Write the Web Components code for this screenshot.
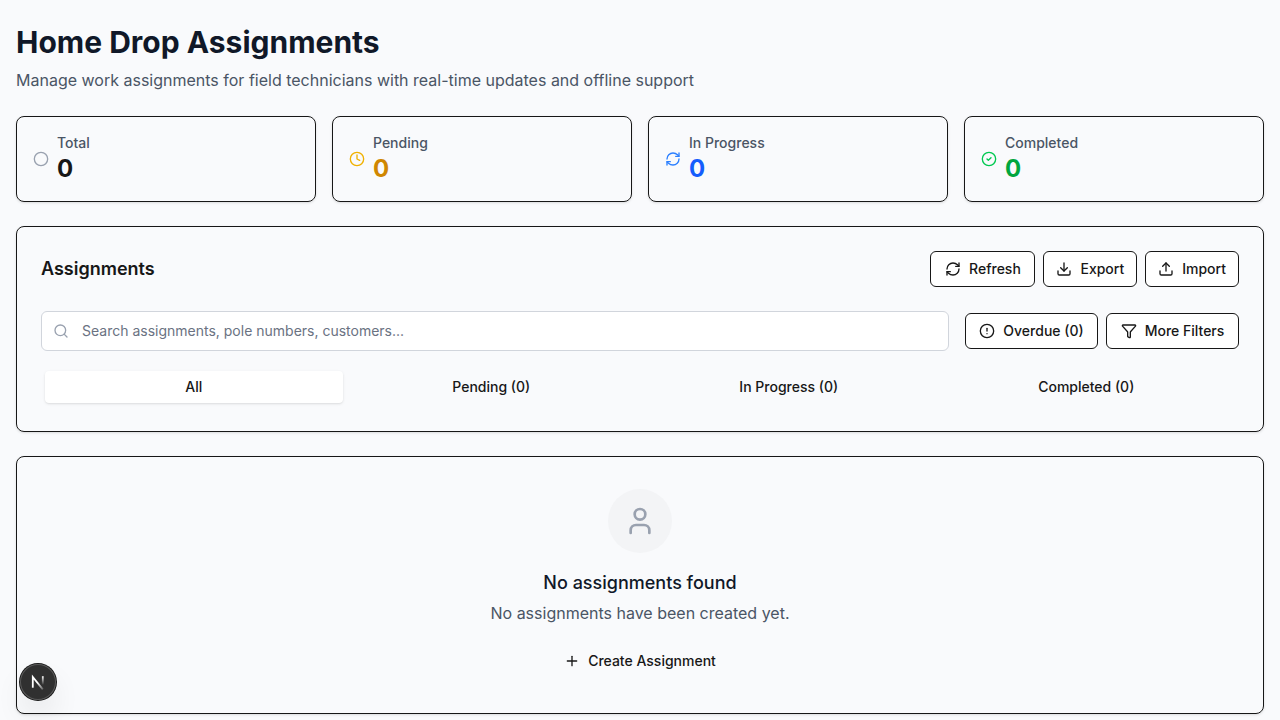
<!DOCTYPE html>
<html lang="en">
<head>
<meta charset="utf-8">
<meta name="viewport" content="width=device-width, initial-scale=1">
<title>Home Drop Assignments</title>
<style>
  body { margin: 0; background: #f9fafc; color: #171717; font: 16px/24px Inter, "Liberation Sans", sans-serif; }
</style>
</head>
<body>
<assignments-page></assignments-page>
<dev-badge></dev-badge>
<script>
const ICONS = {
  circle: '<circle cx="12" cy="12" r="10"/>',
  clock: '<circle cx="12" cy="12" r="10"/><path d="M12 6v6l4 2"/>',
  refresh: '<path d="M3 12a9 9 0 0 1 9-9 9.75 9.75 0 0 1 6.74 2.74L21 8"/><path d="M21 3v5h-5"/><path d="M21 12a9 9 0 0 1-9 9 9.75 9.75 0 0 1-6.74-2.74L3 16"/><path d="M8 16H3v5"/>',
  check: '<circle cx="12" cy="12" r="10"/><path d="m9 12 2 2 4-4"/>',
  download: '<path d="M12 15V3"/><path d="M21 15v4a2 2 0 0 1-2 2H5a2 2 0 0 1-2-2v-4"/><path d="m7 10 5 5 5-5"/>',
  upload: '<path d="M12 3v12"/><path d="m17 8-5-5-5 5"/><path d="M21 15v4a2 2 0 0 1-2 2H5a2 2 0 0 1-2-2v-4"/>',
  search: '<path d="m21 21-4.34-4.34"/><circle cx="11" cy="11" r="8"/>',
  alert: '<circle cx="12" cy="12" r="10"/><path d="M12 8v4"/><path d="M12 16h.01"/>',
  funnel: '<path d="M10 20a1 1 0 0 0 .553.895l2 1A1 1 0 0 0 14 21v-7a2 2 0 0 1 .517-1.341L21.74 4.67A1 1 0 0 0 21 3H3a1 1 0 0 0-.742 1.67l7.225 7.989A2 2 0 0 1 10 14z"/>',
  user: '<path d="M19 21v-2a4 4 0 0 0-4-4H9a4 4 0 0 0-4 4v2"/><circle cx="12" cy="7" r="4"/>',
  plus: '<path d="M5 12h14"/><path d="M12 5v14"/>'
};

const define = (name, render) => customElements.define(name, class extends HTMLElement {
  connectedCallback() {
    if (this.shadowRoot) return;
    this.attachShadow({ mode: 'open' }).innerHTML = render(this);
  }
});

define('ui-icon', el => `
  <style>
    :host { display: block; flex: none; width: var(--icon-size, 16px); height: var(--icon-size, 16px); }
    svg { display: block; width: 100%; height: 100%; }
  </style>
  <svg viewBox="0 0 24 24" fill="none" stroke="currentColor" stroke-width="2" stroke-linecap="round" stroke-linejoin="round" aria-hidden="true">${ICONS[el.getAttribute('name')]}</svg>`);

define('ui-card', () => `
  <style>
    :host { display: block; box-sizing: border-box; border: 1px solid #171717; border-radius: 8px; padding: var(--card-padding, 24px); box-shadow: 0 1px 3px rgb(0 0 0 / .1), 0 1px 2px -1px rgb(0 0 0 / .1); }
  </style>
  <slot></slot>`);

define('stat-card', el => `
  <style>
    :host { display: block; }
    ui-card { --card-padding: 16px; }
    .row { display: flex; align-items: center; gap: 8px; }
    ui-icon { color: var(--stat-icon, #99a1af); }
    p { margin: 0; }
    .label { font-size: 14px; line-height: 20px; font-weight: 500; color: #4a5565; }
    .value { font-size: 24px; line-height: 32px; font-weight: 700; color: var(--stat-value, #171717); }
  </style>
  <ui-card><div class="row">
    <ui-icon name="${el.getAttribute('icon')}"></ui-icon>
    <div><p class="label"><slot></slot></p><p class="value">${el.getAttribute('value')}</p></div>
  </div></ui-card>`);

define('ui-button', el => `
  <style>
    :host { display: block; flex: none; }
    button { display: flex; align-items: center; justify-content: center; gap: 8px; height: 36px; min-width: var(--button-min, 0); padding: 0 12px; border: 1px solid #171717; border-radius: 6px; background: #fff; color: inherit; font: 500 14px/20px Inter, "Liberation Sans", sans-serif; white-space: nowrap; cursor: pointer; }
    :host([ghost]) button { height: 40px; padding: 0 16px; border: 0; background: transparent; }
  </style>
  <button type="button"><ui-icon name="${el.getAttribute('icon')}"></ui-icon><slot></slot></button>`);

define('search-field', el => `
  <style>
    :host { display: block; flex: 1; min-width: 0; }
    label { display: flex; align-items: center; gap: 13px; box-sizing: border-box; height: 40px; padding: 0 11px; border: 1px solid #d1d5dc; border-radius: 6px; background: #fff; color: #99a1af; }
    input { flex: 1; min-width: 0; padding: 0; border: 0; outline: 0; background: transparent; color: #171717; font: 14px/20px Inter, "Liberation Sans", sans-serif; }
    input::placeholder { color: #6a7282; opacity: 1; }
  </style>
  <label><ui-icon name="search"></ui-icon><input type="text" aria-label="Search assignments" placeholder="${el.getAttribute('placeholder')}"></label>`);

define('tab-list', () => `
  <style>
    :host { display: grid; grid-template-columns: repeat(4, 1fr); padding: 4px; }
  </style>
  <slot></slot>`);

define('tab-item', el => `
  <style>
    :host { display: block; }
    button { display: block; width: 100%; height: 32px; padding: 0 12px; border: 0; border-radius: 4px; background: transparent; color: inherit; font: 500 14px/20px Inter, "Liberation Sans", sans-serif; cursor: pointer; }
    :host([selected]) button { background: #fff; box-shadow: 0 1px 3px rgb(0 0 0 / .1), 0 1px 2px -1px rgb(0 0 0 / .1); }
  </style>
  <button type="button" role="tab" aria-selected="${el.hasAttribute('selected')}"><slot></slot></button>`);

define('empty-state', () => `
  <style>
    :host { display: flex; flex-direction: column; align-items: center; text-align: center; }
    .avatar { display: grid; place-items: center; width: 64px; height: 64px; margin-bottom: 16px; border-radius: 50%; background: #f3f4f6; color: #99a1af; --icon-size: 32px; }
    h3 { margin: 0 0 4px; font-size: 18px; line-height: 28px; font-weight: 500; color: #101828; }
    p { margin: 0 0 16px; color: #4a5565; }
  </style>
  <div class="avatar"><ui-icon name="user"></ui-icon></div>
  <h3>No assignments found</h3>
  <p>No assignments have been created yet.</p>
  <ui-button ghost icon="plus">Create Assignment</ui-button>`);

define('assignments-page', () => `
  <style>
    :host { display: block; padding: 24px 16px; }
    h1 { margin: 0 0 8px; font-size: 30px; line-height: 36px; font-weight: 700; color: #101828; }
    .subtitle { margin: 0; color: #4a5565; }
    header, .stats, .panel { margin-bottom: 24px; }
    .stats { display: grid; grid-template-columns: repeat(4, 1fr); gap: 16px; }
    .pending { --stat-icon: #f0b100; --stat-value: #d08700; }
    .progress { --stat-icon: #2b7fff; --stat-value: #155dfc; }
    .completed { --stat-icon: #00c950; --stat-value: #00a63e; }
    .bar, .filters, .actions { display: flex; align-items: center; }
    .bar { justify-content: space-between; margin-bottom: 24px; }
    .bar [icon="refresh"] { --button-min: 105px; }
    .filters { gap: 16px; margin-bottom: 16px; --button-min: 133px; }
    .actions { gap: 8px; }
    h2 { margin: 0; font-size: 18px; line-height: 28px; font-weight: 600; }
    .empty { --card-padding: 32px 24px; }
  </style>
  <main>
    <header>
      <h1>Home Drop Assignments</h1>
      <p class="subtitle">Manage work assignments for field technicians with real-time updates and offline support</p>
    </header>
    <section class="stats">
      <stat-card icon="circle" value="0">Total</stat-card>
      <stat-card class="pending" icon="clock" value="0">Pending</stat-card>
      <stat-card class="progress" icon="refresh" value="0">In Progress</stat-card>
      <stat-card class="completed" icon="check" value="0">Completed</stat-card>
    </section>
    <ui-card class="panel">
      <div class="bar">
        <h2>Assignments</h2>
        <div class="actions">
          <ui-button icon="refresh">Refresh</ui-button>
          <ui-button icon="download">Export</ui-button>
          <ui-button icon="upload">Import</ui-button>
        </div>
      </div>
      <div class="filters">
        <search-field placeholder="Search assignments, pole numbers, customers..."></search-field>
        <div class="actions">
          <ui-button icon="alert">Overdue (0)</ui-button>
          <ui-button icon="funnel">More Filters</ui-button>
        </div>
      </div>
      <tab-list role="tablist">
        <tab-item selected>All</tab-item>
        <tab-item>Pending (0)</tab-item>
        <tab-item>In Progress (0)</tab-item>
        <tab-item>Completed (0)</tab-item>
      </tab-list>
    </ui-card>
    <ui-card class="empty"><empty-state></empty-state></ui-card>
  </main>`);

define('dev-badge', () => `
  <style>
    :host { display: block; position: fixed; left: 20px; bottom: 20px; }
    button { display: block; width: 36px; height: 36px; padding: 0; border: 0; border-radius: 50%; background: #303030; box-shadow: 0 0 0 1px #171717, inset 0 0 0 1px #5a5a5a, 0 16px 32px -8px rgb(0 0 0 / .24); cursor: pointer; }
    svg { display: block; width: 36px; height: 36px; }
  </style>
  <button type="button" aria-label="Open developer tools">
    <svg viewBox="0 0 36 36" fill="none" stroke-width="1.8" aria-hidden="true">
      <defs>
        <linearGradient id="diagonal" gradientUnits="userSpaceOnUse" x1="18" y1="18" x2="24" y2="25"><stop stop-color="#fff"/><stop offset="1" stop-color="#fff" stop-opacity=".2"/></linearGradient>
        <linearGradient id="stem" gradientUnits="userSpaceOnUse" x1="23" y1="12" x2="23" y2="21"><stop stop-color="#fff"/><stop offset="1" stop-color="#fff" stop-opacity="0"/></linearGradient>
      </defs>
      <path d="M12.8 23.8V13l10 12.4" stroke="url(#diagonal)"/>
      <path d="M22.8 12.2v8.5" stroke="url(#stem)"/>
    </svg>
  </button>`);
</script>
</body>
</html>
